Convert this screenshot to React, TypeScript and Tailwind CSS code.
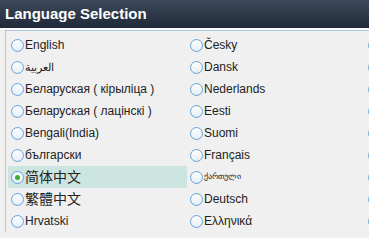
import React from "react";

const col1 = [
  "English",
  "العربية",
  "Беларуская ( кірыліца )",
  "Беларуская ( лацінскі )",
  "Bengali(India)",
  "български",
  "简体中文",
  "繁體中文",
  "Hrvatski",
];
const col2 = [
  "Česky",
  "Dansk",
  "Nederlands",
  "Eesti",
  "Suomi",
  "Français",
  "ქართული",
  "Deutsch",
  "Ελληνικά",
];

function Radio({ checked }: { checked?: boolean }) {
  return (
    <span className="flex h-[13px] w-[13px] shrink-0 items-center justify-center rounded-full border border-[#6aa6dc] bg-gradient-to-b from-[#ffffff] to-[#e4eef8] shadow-[inset_0_0_1px_#c4dcf2]">
      {checked && <span className="h-[5px] w-[5px] rounded-full bg-[#3cae2c]" />}
    </span>
  );
}

function labelClass(label: string) {
  if (/[\u4e00-\u9fff]/.test(label)) return "text-[14px]";
  if (/[\u10a0-\u10ff]/.test(label)) return "text-[8px]";
  if (/[\u0600-\u06ff]/.test(label)) return "text-[11px]";
  return "text-[12px]";
}

function Row({ label, checked }: { label: string; checked?: boolean }) {
  return (
    <div
      className={`flex h-[22px] items-center gap-[1px] pl-[3px] ${checked ? "bg-[#cde5e0]" : ""}`}
    >
      <Radio checked={checked} />
      <span className={`whitespace-nowrap text-[#222] ${labelClass(label)}`}>{label}</span>
    </div>
  );
}

export default function App() {
  return (
    <div
      className="h-[238px] w-[369px] overflow-hidden bg-[#f0f0f0]"
      style={{ fontFamily: '"Liberation Sans", "Noto Sans CJK SC", sans-serif' }}
    >
      <div className="flex h-[28px] items-center bg-gradient-to-b from-[#3e4a5b] to-[#1f2939] pl-[5px]">
        <span className="text-[15px] font-bold text-white">Language Selection</span>
      </div>
      <div className="h-[2px] bg-[#fbfbfb]" />
      <div className="ml-[5px] border-l border-t border-[#a9c9e4] bg-[#f0f0f0] pt-[3px] pl-[2px]">
        <div className="grid grid-cols-[179px_178px_40px]">
          <div className="flex flex-col">
            {col1.map((l, i) => (
              <Row key={l} label={l} checked={i === 6} />
            ))}
          </div>
          <div className="flex flex-col">
            {col2.map((l) => (
              <Row key={l} label={l} />
            ))}
          </div>
          <div className="flex flex-col">
            {col2.map((l) => (
              <Row key={l} label="" />
            ))}
          </div>
        </div>
      </div>
    </div>
  );
}
